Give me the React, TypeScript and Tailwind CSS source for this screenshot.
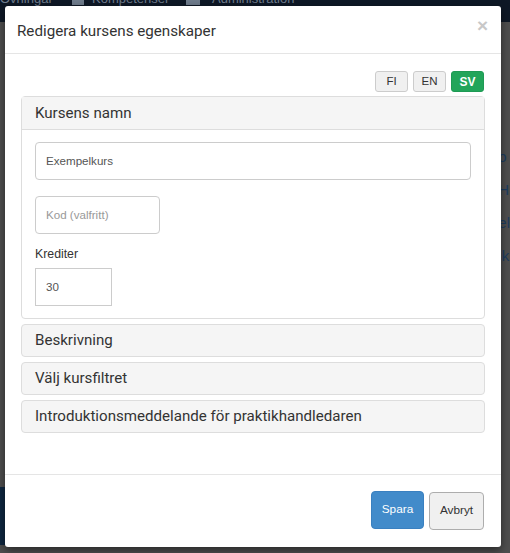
import React from "react";

const heading = { fontFamily: 'Roboto, "Open Sans", sans-serif' };
const arial = { fontFamily: '"Liberation Sans", Arial, sans-serif' };

function CollapsedPanel({ title }: { title: string }) {
  return (
    <div className="flex h-[33px] items-center rounded-[4px] border border-[#dddddd] bg-[#f5f5f5] px-[13px]">
      <span className="text-[15.1px] text-[#333333]" style={heading}>
        {title}
      </span>
    </div>
  );
}

export default function App() {
  return (
    <div className="relative h-[553px] w-[510px] overflow-hidden bg-[#4e4e4e]">
      {/* page behind the backdrop, mostly hidden by the modal */}
      <div className="h-[22px] bg-[#0e1826]">
        <div className="h-[6px] overflow-hidden">
          <div className="-mt-[9px] flex items-center text-[13px] leading-[15px] text-[#6f7c8c]" style={arial}>
            <span className="w-[72px]">Övningar</span>
            <span className="mr-[8px] h-[12px] w-[12px] bg-[#6f7c8c]" />
            <span className="w-[94px]">Kompetenser</span>
            <span className="mr-[12px] h-[12px] w-[14px] rounded-t-full bg-[#6f7c8c]" />
            <span>Administration</span>
          </div>
        </div>
      </div>
      <div className="absolute right-0 top-[148px] flex flex-col gap-[16px] text-[15px] leading-[17px] text-[#1c3c5e]" style={arial}>
        <span>o</span>
        <span>H</span>
        <span>el</span>
        <span>ik</span>
      </div>
      <div className="absolute left-0 top-[487px] h-[58px] w-[6px] bg-[#0f2740]" />

      {/* modal */}
      <div className="absolute left-[5px] top-[6px] flex h-[541px] w-[496px] flex-col rounded-[3px] bg-white shadow-[0_3px_9px_rgba(0,0,0,0.5)]">
        <div className="flex h-[48px] items-center justify-between border-b border-[#e5e5e5] pl-[12px] pr-[13px]">
          <h4 className="mt-[3px] text-[15.2px] text-[#333333]" style={heading}>
            Redigera kursens egenskaper
          </h4>
          <span className="-mt-[8px] text-[19px] font-bold leading-none text-[#c8c8c8]" style={arial}>
            ×
          </span>
        </div>

        <div className="flex flex-1 flex-col px-[16px] pt-[17px]">
          <div className="flex justify-end gap-[5px] pr-[1px]">
            {["FI", "EN"].map((l) => (
              <span
                key={l}
                className="flex h-[21px] w-[33px] items-center justify-center rounded-[3px] border border-[#cccccc] bg-[#f0f0f0] text-[11.5px] text-[#333333]"
                style={arial}
              >
                {l}
              </span>
            ))}
            <span
              className="flex h-[21px] w-[33px] items-center justify-center rounded-[3px] border border-[#1e9a54] bg-[#22a55a] text-[12px] font-bold text-white"
              style={arial}
            >
              SV
            </span>
          </div>

          <div className="mt-[4px] rounded-[4px] border border-[#dddddd]">
            <div className="flex h-[33px] items-center border-b border-[#dddddd] bg-[#f5f5f5] px-[13px]">
              <span className="text-[15.1px] text-[#333333]" style={heading}>
                Kursens namn
              </span>
            </div>
            <div className="flex flex-col px-[13px] pb-[12px] pt-[12px]" style={arial}>
              <div className="flex h-[38px] items-center rounded-[4px] border border-[#cccccc] px-[10px] text-[11.6px] text-[#555555]">
                Exempelkurs
              </div>
              <div className="mt-[16px] flex h-[38px] w-[125px] items-center rounded-[4px] border border-[#cccccc] px-[10px] text-[11.6px] text-[#999999]">
                Kod (valfritt)
              </div>
              <label className="mt-[10px] text-[12.3px] leading-[20px] text-[#333333]">Krediter</label>
              <div className="mt-[4px] flex h-[38px] w-[77px] items-center border border-[#cccccc] px-[10px] text-[11.6px] text-[#555555]">
                30
              </div>
            </div>
          </div>

          <div className="mt-[5px] flex flex-col gap-[5px]">
            <CollapsedPanel title="Beskrivning" />
            <CollapsedPanel title="Välj kursfiltret" />
            <CollapsedPanel title="Introduktionsmeddelande för praktikhandledaren" />
          </div>
        </div>

        <div className="flex h-[73px] items-start justify-end gap-[5px] border-t border-[#e5e5e5] pr-[17px] pt-[16px]" style={arial}>
          <span className="flex h-[38px] w-[53px] items-center justify-center rounded-[4px] border border-[#3a80c0] bg-[#428bca] text-[11.8px] text-white">
            Spara
          </span>
          <span className="mt-[1px] flex h-[38px] w-[55px] items-center justify-center rounded-[4px] border border-[#adadad] bg-[#f0f0f0] text-[11.8px] text-[#333333]">
            Avbryt
          </span>
        </div>
      </div>
    </div>
  );
}
